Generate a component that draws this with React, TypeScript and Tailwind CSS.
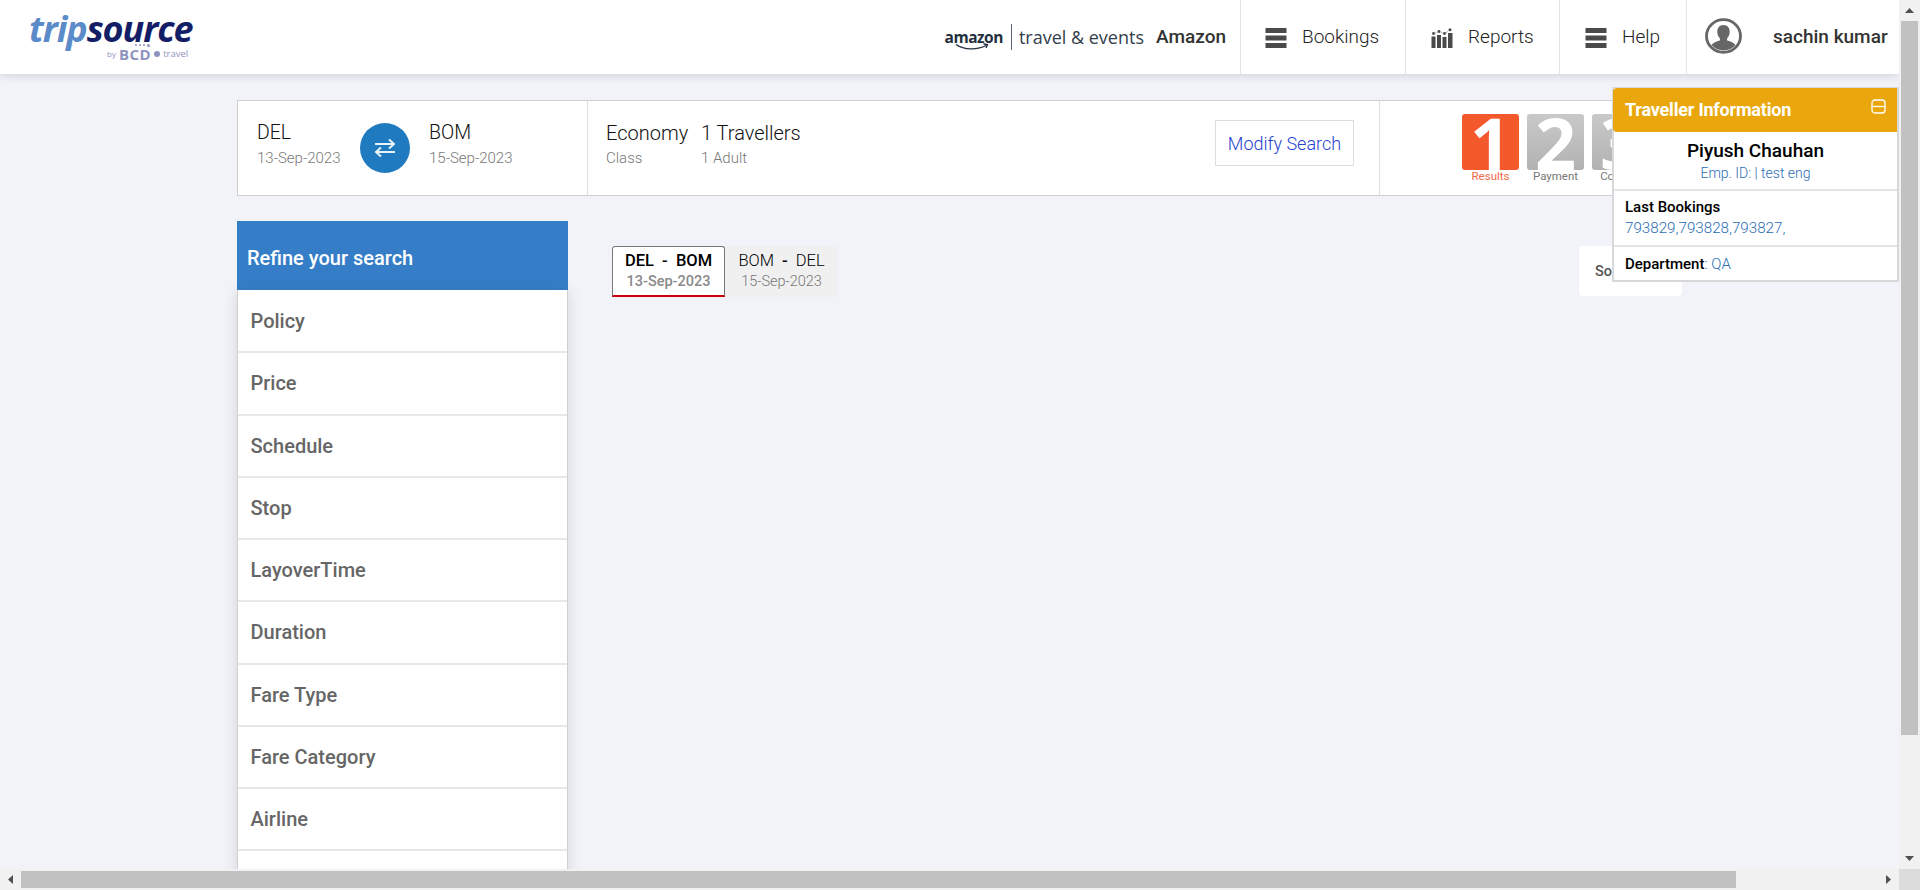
const filters = ["Policy", "Price", "Schedule", "Stop", "LayoverTime", "Duration", "Fare Type", "Fare Category", "Airline", ""];

function Bars() {
  return (
    <svg width="22" height="20" viewBox="0 0 22 20" className="shrink-0" fill="#4a4a4a">
      <rect x="0.5" y="0" width="21" height="5" />
      <rect x="0.5" y="7.5" width="21" height="5" />
      <rect x="0.5" y="15" width="21" height="5" />
    </svg>
  );
}

function ReportsIcon() {
  return (
    <svg width="22" height="20" viewBox="0 0 22 20" className="shrink-0" fill="#4a4a4a">
      <rect x="0.5" y="8.5" width="4" height="11.500" />
      <rect x="6" y="7" width="4" height="13" />
      <rect x="11.5" y="9" width="4" height="11" />
      <rect x="17" y="5" width="4.500" height="15" />
      <path d="M2.500 6 8 3.500 13.500 6l5.500-4.500" fill="none" stroke="#4a4a4a" strokeWidth="0.7" strokeDasharray="1 1" />
      <circle cx="2.500" cy="5.500" r="1.400" />
      <circle cx="8" cy="3.500" r="1.400" />
      <circle cx="13.500" cy="5.500" r="1.400" />
      <circle cx="19" cy="1.700" r="1.500" />
    </svg>
  );
}

function Avatar() {
  return (
    <svg width="37" height="36" viewBox="0 0 37 36">
      <ellipse cx="18.5" cy="18" rx="17" ry="16.4" fill="#fff" stroke="#666" strokeWidth="2.800" />
      <path d="M18.5 7c-4 0-6.200 2.900-6.200 6.800 0 2.700 1 4.900 2.600 6.400v2.300c-3.500 1.100-7 2.400-8.300 4.500 2.800 3.400 7 5.500 11.900 5.500s9.100-2.100 11.900-5.500c-1.300-2.100-4.800-3.400-8.300-4.500v-2.300c1.600-1.500 2.600-3.700 2.600-6.400 0-3.900-2.200-6.800-6.200-6.800z" fill="#666" />
    </svg>
  );
}

function StepTile({ n, label, active }: { n: string; label: string; active?: boolean }) {
  return (
    <div className="flex w-[57px] shrink-0 flex-col items-center">
      <div
        className={
          active
            ? "flex h-[56px] w-[57px] items-center justify-center rounded-[3px] bg-[#f4592c] font-['Open_Sans',sans-serif] text-[72px] leading-[56px] font-bold text-white"
            : "flex h-[56px] w-[57px] items-center justify-center rounded-[3px] bg-gradient-to-b from-[#c9c9c9] to-[#b2b2b2] font-['Open_Sans',sans-serif] text-[72px] leading-[56px] font-bold text-white"
        }
      >
        {n}
      </div>
      <span className={active ? "mt-[-1px] text-[11.500px] leading-[14px] text-[#f4694a]" : "mt-[-1px] text-[11.500px] leading-[14px] text-[#777]"}>
        {label}
      </span>
    </div>
  );
}

function ScrollArrow({ d }: { d: string }) {
  return (
    <svg width="21" height="21" viewBox="0 0 21 21" className="shrink-0" fill="#505050">
      <path d={d} />
    </svg>
  );
}

export default function App() {
  return (
    <div className="flex h-[890px] w-[1920px] flex-col overflow-hidden bg-[#f2f3f8] font-['Roboto',sans-serif]">
      <div className="flex min-h-0 flex-1">
        <div className="relative min-w-0 flex-1 overflow-hidden">
          <header className="flex h-[74px] items-center justify-between bg-white shadow-[0_2px_8px_rgba(60,70,90,0.18)]">
            <div className="mt-[-3px] ml-[29px] flex flex-col">
              <div className="font-['Open_Sans',sans-serif] text-[36px] leading-[36px] font-bold tracking-[-1.100px] italic">
                <span className="text-[#5b8bc9]">trip</span>
                <span className="text-[#141e66]">source</span>
              </div>
              <div className="ml-[78px] flex items-center gap-[3px] font-['Open_Sans',sans-serif] text-[#8f93bf]">
                <span className="text-[8px] leading-[14px]">by</span>
                <span className="relative text-[15px] leading-[14px] font-bold tracking-[0.5px]">
                  BCD
                  <span className="absolute top-[-3px] left-[16px] flex gap-[2px]">
                    <i className="size-[2px] rounded-full bg-[#8f93bf]" />
                    <i className="size-[2px] rounded-full bg-[#8f93bf]" />
                    <i className="size-[2px] rounded-full bg-[#8f93bf]" />
                    <i className="size-[3px] rounded-full bg-[#8f93bf]" />
                  </span>
                </span>
                <i className="size-[6px] rounded-full bg-[#8f93bf]" />
                <span className="text-[9.500px] leading-[14px]">travel</span>
              </div>
            </div>

            <div className="flex h-full items-center">
              <div className="relative mr-[8px] flex flex-col font-['Open_Sans',sans-serif] text-[15.500px] leading-[18px] font-bold tracking-[-0.5px] text-[#232f3e]">
                amazon
                <svg width="34" height="8" viewBox="0 0 34 8" className="absolute top-[15px] left-[10px]" fill="none" stroke="#232f3e" strokeWidth="1.300">
                  <path d="M1 1.500c8 5.500 21 6 31 .5M28.500 1l4 .5-1.500 3.500" />
                </svg>
              </div>
              <div className="h-[26px] w-[1px] bg-[#5a6570]" />
              <span className="ml-[7px] font-['Open_Sans',sans-serif] text-[18px] text-[#33404d]">travel &amp; events</span>
              <span className="ml-[12px] w-[84px] text-[19px] font-medium text-[#333]">Amazon</span>

              <div className="flex h-full w-[165px] items-center gap-[15px] border-l border-[#e4e4e4] pt-[1px] pl-[24px] text-[19px] font-light text-[#222]">
                <Bars />
                Bookings
              </div>
              <div className="flex h-full w-[154px] items-center gap-[15px] border-l border-[#e4e4e4] pt-[1px] pl-[25px] text-[19px] font-light text-[#222]">
                <ReportsIcon />
                Reports
              </div>
              <div className="flex h-full w-[127px] items-center gap-[15px] border-l border-[#e4e4e4] pt-[1px] pl-[25px] text-[19px] font-light text-[#222]">
                <Bars />
                Help
              </div>
              <div className="flex h-full w-[213px] items-center border-l border-[#e4e4e4] pl-[18px]">
                <div className="mt-[-3px]">
                  <Avatar />
                </div>
                <span className="ml-[31px] text-[19px] font-medium text-[#333]">sachin kumar</span>
              </div>
            </div>
          </header>

          <main className="ml-[237px] w-[1445px] pt-[26px]">
            <section className="flex h-[96px] border-[1.500px] border-[#cfcfcf] bg-white">
              <div className="flex w-[350px] shrink-0 items-center border-r border-[#dedede] pb-[8px] pl-[19px]">
                <div className="w-[103px]">
                  <div className="text-[19.500px] leading-[26px] font-light text-[#111]">DEL</div>
                  <div className="mt-[2px] text-[15px] leading-[20px] font-light text-[#777]">13-Sep-2023</div>
                </div>
                <div className="mt-[8px] flex size-[50px] items-center justify-center rounded-full bg-[#1f7abf]">
                  <svg width="22" height="20" viewBox="0 0 22 20" fill="none" stroke="#e9f3fa" strokeWidth="2">
                    <path d="M1 6h19M15 1.500 20 6l-5 4.500" />
                    <path d="M21 14H2M7 9.500 2 14l5 4.500" />
                  </svg>
                </div>
                <div className="ml-[19px]">
                  <div className="text-[19.500px] leading-[26px] font-light text-[#111]">BOM</div>
                  <div className="mt-[2px] text-[15px] leading-[20px] font-light text-[#777]">15-Sep-2023</div>
                </div>
              </div>

              <div className="flex flex-1 items-center border-r border-[#dedede] pb-[8px] pl-[18px]">
                <div className="w-[95px] shrink-0">
                  <div className="text-[20px] leading-[26px] font-light text-[#111]">Economy</div>
                  <div className="mt-[2px] text-[15px] leading-[20px] font-light text-[#777]">Class</div>
                </div>
                <div>
                  <div className="text-[20px] leading-[26px] font-light text-[#111]">1 Travellers</div>
                  <div className="mt-[2px] text-[15px] leading-[20px] font-light text-[#777]">1 Adult</div>
                </div>
                <button className="mt-[-2px] mr-[25px] ml-auto h-[46px] w-[139px] border border-[#dedede] bg-white text-[18px] font-light text-[#2343d0]">
                  Modify Search
                </button>
              </div>

              <div className="flex w-[301px] shrink-0 items-start gap-[8px] pt-[13px] pl-[82px]">
                <StepTile n="1" label="Results" active />
                <StepTile n="2" label="Payment" />
                <StepTile n="3" label="Confirm" />
              </div>
            </section>

            <div className="mt-[25px] flex">
              <aside className="w-[331px] shrink-0">
                <div className="flex h-[69px] items-center bg-[#357ec7] pt-[4px] pl-[10px] text-[20px] font-medium text-white">
                  Refine your search
                </div>
                <div className="border-x border-[#d0d0d0] bg-white pt-[1px] shadow-[0_2px_12px_rgba(60,70,90,0.18)]">
                  {filters.map((f, i) => (
                    <div key={i} className="flex h-[62.250px] items-center border-b-2 border-[#e8e8e8] pl-[12.500px] text-[20px] font-medium text-[#666]">
                      {f}
                    </div>
                  ))}
                </div>
              </aside>

              <div className="mt-[25px] ml-[44px] flex flex-1 items-start">
                <div className="flex h-[51px] w-[113px] flex-col items-center rounded-t-[3px] border border-b-2 border-[#777] border-b-[#c8000a] bg-white pt-[2px]">
                  <div className="text-[16.500px] leading-[24px] font-medium whitespace-pre text-black">DEL  -  BOM</div>
                  <div className="text-[14.500px] leading-[17px] font-medium text-[#8a8a8a]">13-Sep-2023</div>
                </div>
                <div className="flex h-[51px] w-[113px] flex-col items-center rounded-tr-[3px] bg-[#f0f0f0] pt-[3px]">
                  <div className="text-[16.500px] leading-[24px] font-light whitespace-pre text-black">BOM  <b className="font-medium">-</b>  DEL</div>
                  <div className="text-[14.500px] leading-[17px] font-light text-[#777]">15-Sep-2023</div>
                </div>
                <div className="ml-auto flex h-[50px] w-[103px] items-center rounded-[4px] bg-white pt-[1px] pl-[16px] text-[14.500px] font-medium text-[#555]">
                  Sort
                </div>
              </div>
            </div>
          </main>

          <aside className="absolute top-[87px] right-0 w-[287px] border-2 border-t-[1px] border-[#d8d8d8] bg-white">
            <div className="ml-[-1px] flex h-[44px] items-center justify-between rounded-l-[4px] bg-[#e9a70d] pr-[11px] pb-[2px] pl-[12px] text-[18px] font-bold tracking-[-0.2px] text-white">
              Traveller Information
              <svg width="15" height="15" viewBox="0 0 15 15" fill="none" stroke="#fff" strokeWidth="1.300" className="mt-[-5px]">
                <rect x="1" y="1" width="13" height="13" rx="3" />
                <path d="M1 7.500h13" />
              </svg>
            </div>
            <div className="flex h-[59px] flex-col items-center border-b-2 border-[#e4e4e4] pt-[6px]">
              <div className="text-[19px] leading-[26px] font-medium text-black">Piyush Chauhan</div>
              <div className="text-[14px] leading-[19px] font-light text-[#2a6db5]">Emp. ID: | test eng</div>
            </div>
            <div className="h-[56px] border-b-2 border-[#e4e4e4] pt-[6px] pl-[11px]">
              <div className="text-[15px] leading-[20px] font-medium text-black">Last Bookings</div>
              <div className="text-[15.200px] leading-[22px] font-light text-[#2a6db5]">793829,793828,793827,</div>
            </div>
            <div className="h-[33px] pt-[7px] pl-[11px] text-[15px] leading-[20px] font-light text-[#2a6db5]">
              <span className="font-medium text-black">Department</span>: QA
            </div>
          </aside>
        </div>

        <div className="flex w-[21px] shrink-0 flex-col bg-[#f1f1f1]">
          <ScrollArrow d="M6 13l4.500-5 4.500 5z" />
          <div className="mx-[2px] h-[714px] bg-[#c1c1c1]" />
          <div className="flex-1" />
          <ScrollArrow d="M6 8l4.500 5 4.500-5z" />
        </div>
      </div>

      <div className="flex h-[21px] shrink-0 bg-[#f1f1f1]">
        <ScrollArrow d="M13 6l-5 4.500 5 4.500z" />
        <div className="my-[2px] w-[1715px] bg-[#c1c1c1]" />
        <div className="flex-1" />
        <ScrollArrow d="M8 6l5 4.500-5 4.500z" />
        <div className="w-[21px] bg-[#dcdcdc]" />
      </div>
    </div>
  );
}
